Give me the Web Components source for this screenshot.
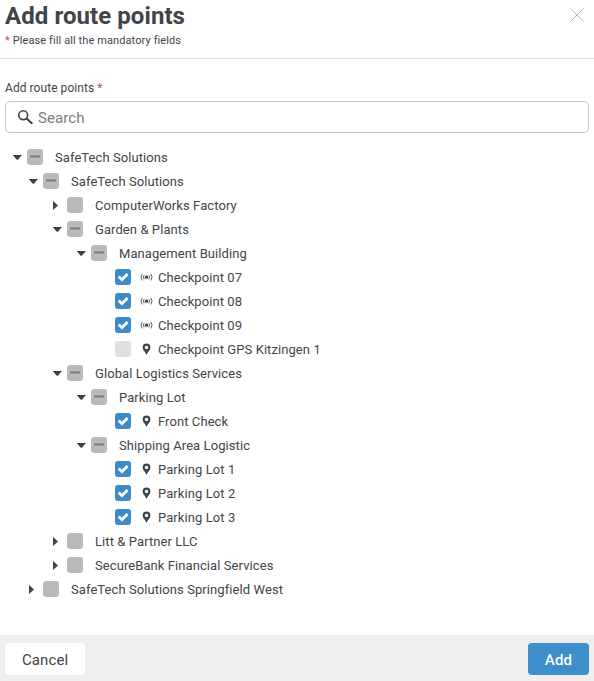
<!DOCTYPE html>
<html lang="en">
<head>
<meta charset="UTF-8">
<title>Add route points</title>
<style>
    body {
        margin: 0;
        background: #fff;
        color: #424547;
        font-family: Roboto, "Liberation Sans", sans-serif;
    }
</style>
</head>
<body>
<route-dialog>
    <dialog-header slot="header">
        Add route points
        <span slot="hint">Please fill all the mandatory fields</span>
    </dialog-header>
    <search-field label="Add route points" placeholder="Search"></search-field>
    <tree-view></tree-view>
    <action-button slot="footer">Cancel</action-button>
    <action-button slot="footer" primary>Add</action-button>
</route-dialog>

<script>
class RouteDialog extends HTMLElement {
    constructor() {
        super();
        this.attachShadow({ mode: "open" });
        this.shadowRoot.innerHTML = `
            <style>
                :host {
                    display: flex;
                    flex-direction: column;
                    height: 681px;
                    overflow: hidden;
                }
                main {
                    flex: 1;
                    padding: 20px 5px 0;
                }
                footer {
                    display: flex;
                    justify-content: space-between;
                    box-sizing: border-box;
                    height: 46px;
                    padding: 8px 5px 6px;
                    background: #efefef;
                }
            </style>
            <slot name="header"></slot>
            <main><slot></slot></main>
            <footer><slot name="footer"></slot></footer>
        `;
    }
}

class DialogHeader extends HTMLElement {
    constructor() {
        super();
        this.attachShadow({ mode: "open" });
        this.shadowRoot.innerHTML = `
            <style>
                :host {
                    display: flex;
                    justify-content: space-between;
                    box-sizing: border-box;
                    height: 59px;
                    padding: 2px 9px 0 5px;
                    border-bottom: 1px solid #dcdfe0;
                }
                h1 {
                    margin: 0;
                    font-size: 24px;
                    line-height: 28px;
                    font-weight: 700;
                    letter-spacing: 0.07px;
                    white-space: nowrap;
                }
                p {
                    margin: 3px 0 0;
                    font-size: 11px;
                    line-height: 16px;
                    letter-spacing: 0.1px;
                }
                b {
                    color: #c0504d;
                    font-weight: 400;
                }
                svg {
                    margin-top: 5px;
                }
            </style>
            <div>
                <h1><slot></slot></h1>
                <p><b>*</b> <slot name="hint"></slot></p>
            </div>
            <svg width="16" height="16" viewBox="0 0 16 16" fill="none" stroke="#b5b8ba" stroke-width="1">
                <path d="M1.5 1.5l13 13M14.5 1.5l-13 13"/>
            </svg>
        `;
    }
}

class SearchField extends HTMLElement {
    constructor() {
        super();
        this.attachShadow({ mode: "open" });
    }

    connectedCallback() {
        this.shadowRoot.innerHTML = `
            <style>
                :host {
                    display: block;
                }
                label {
                    display: block;
                    height: 22px;
                    font-size: 12px;
                    line-height: 18px;
                    letter-spacing: 0.06px;
                }
                b {
                    color: #c0504d;
                    font-weight: 400;
                }
                .box {
                    display: flex;
                    align-items: center;
                    gap: 4px;
                    box-sizing: border-box;
                    height: 32px;
                    padding: 0 12px;
                    border: 1px solid #c3c9ca;
                    border-radius: 5px;
                }
                input {
                    flex: 1;
                    padding: 2px 0 0;
                    border: 0;
                    outline: 0;
                    background: none;
                    font: 15px/20px Roboto, "Liberation Sans", sans-serif;
                    letter-spacing: 0.1px;
                }
                input::placeholder {
                    color: #7a7d7f;
                    opacity: 1;
                }
            </style>
            <label>${this.getAttribute("label")} <b>*</b></label>
            <div class="box">
                <svg width="16" height="16" viewBox="0 0 16 16" fill="none" stroke="#3f4245">
                    <circle cx="5.2" cy="6.2" r="4.4" stroke-width="1.6"/>
                    <path d="M8.3 9.3l6 5.5" stroke-width="2.1"/>
                </svg>
                <input type="text" placeholder="${this.getAttribute("placeholder")}">
            </div>
        `;
    }
}

class CheckBox extends HTMLElement {
    constructor() {
        super();
        this.attachShadow({ mode: "open" });
    }

    connectedCallback() {
        const marks = {
            checked: `<path d="M3.7 7.5l3.3 3.1 5.6-5.5" stroke="#fff" stroke-width="2.8"/>`,
            partial: `<path d="M3 7.5h10" stroke="#858585" stroke-width="2.4"/>`,
        };
        this.shadowRoot.innerHTML = `
            <style>
                :host {
                    display: block;
                    width: 16px;
                    height: 16px;
                    border-radius: 3px;
                    background: #bababa;
                }
                :host([state="checked"]) {
                    background: #3d8bc6;
                }
                :host([state="disabled"]) {
                    background: #dfdfdf;
                }
                svg {
                    display: block;
                }
            </style>
            <svg width="16" height="16" viewBox="0 0 16 16" fill="none">${marks[this.getAttribute("state")] || ""}</svg>
        `;
    }
}

const pointIcons = {
    beacon: `
        <svg width="13" height="10" viewBox="0 0 13 10" fill="none" stroke="#4b4e50" stroke-width="0.9">
            <circle cx="6.5" cy="5.2" r="1.6" fill="#3f4245" stroke="none"/>
            <path d="M4.2 3.1a3.4 3.4 0 0 0 0 4.2M8.8 3.1a3.4 3.4 0 0 1 0 4.2M2.2 1.9a5.6 5.6 0 0 0 0 6.6M10.8 1.9a5.6 5.6 0 0 1 0 6.6"/>
        </svg>`,
    pin: `
        <svg width="13" height="12" viewBox="0 0 13 12">
            <path fill="#3f4245" fill-rule="evenodd" d="M6.5 0.6a3.9 3.9 0 0 0-3.9 3.9c0 2.6 2.7 4.3 3.9 7.4 1.2-3.1 3.9-4.8 3.9-7.4a3.9 3.9 0 0 0-3.9-3.9zM6.5 2.8a1.7 1.7 0 1 1 0 3.4a1.7 1.7 0 0 1 0-3.4z"/>
        </svg>`,
};

// A folder shows an arrow, a point shows its kind; child nodes go in the slot
class TreeNode extends HTMLElement {
    constructor() {
        super();
        this.attachShadow({ mode: "open" });
    }

    connectedCallback() {
        const icon = pointIcons[this.getAttribute("icon")] || "";
        const open = this.hasAttribute("open");
        const arrow = open ? "M0.6 3h9.4l-4.7 5.3z" : "M1 1l5 4.5-5 4.5z";

        this.shadowRoot.innerHTML = `
            <style>
                :host {
                    display: block;
                }
                .row {
                    display: flex;
                    align-items: center;
                    height: 24px;
                }
                .arrow {
                    flex: none;
                    width: 10px;
                    height: 10px;
                    margin-right: 5px;
                }
                .label {
                    margin-left: 12px;
                    padding-top: 2px;
                    font-size: 13px;
                    line-height: 22px;
                    letter-spacing: 0.08px;
                    white-space: nowrap;
                }
                .icon {
                    display: flex;
                    margin-left: 9px;
                }
                .icon + .label {
                    margin-left: 5px;
                }
                .children {
                    padding-left: var(--indent, 24px);
                }
            </style>
            <div class="row">
                <svg class="arrow" viewBox="0 0 10 10">${icon ? "" : `<path fill="#3f4245" d="${arrow}"/>`}</svg>
                <check-box state="${this.getAttribute("state") || ""}"></check-box>
                ${icon ? `<span class="icon">${icon}</span>` : ""}
                <span class="label">${this.getAttribute("label")}</span>
            </div>
            <div class="children"><slot></slot></div>
        `;
    }
}

const point = (label, icon, state = "checked") => ({ label, icon, state });
const closed = (label) => ({ label });
const group = (label, children) => ({ label, children, state: "partial" });

const routeTree = group("SafeTech Solutions", [
    group("SafeTech Solutions", [
        closed("ComputerWorks Factory"),
        group("Garden &amp; Plants", [
            group("Management Building", [
                point("Checkpoint 07", "beacon"),
                point("Checkpoint 08", "beacon"),
                point("Checkpoint 09", "beacon"),
                point("Checkpoint GPS Kitzingen 1", "pin", "disabled"),
            ]),
        ]),
        group("Global Logistics Services", [
            group("Parking Lot", [
                point("Front Check", "pin"),
            ]),
            group("Shipping Area Logistic", [
                point("Parking Lot 1", "pin"),
                point("Parking Lot 2", "pin"),
                point("Parking Lot 3", "pin"),
            ]),
        ]),
        closed("Litt &amp; Partner LLC"),
        closed("SecureBank Financial Services"),
    ]),
    closed("SafeTech Solutions Springfield West"),
]);

class TreeView extends HTMLElement {
    constructor() {
        super();
        this.attachShadow({ mode: "open" });
    }

    connectedCallback() {
        this.shadowRoot.innerHTML = `
            <style>
                :host {
                    display: block;
                    padding: 12px 0 0 7px;
                }
                .root {
                    --indent: 16px;
                }
                .root > tree-node {
                    --indent: 24px;
                }
            </style>
            ${this.renderNode(routeTree, "root")}
        `;
    }

    renderNode(node, className = "") {
        const children = node.children || [];
        return `<tree-node class="${className}" label="${node.label}" state="${node.state || ""}" icon="${node.icon || ""}"${children.length ? " open" : ""}>${children.map((child) => this.renderNode(child)).join("")}</tree-node>`;
    }
}

class ActionButton extends HTMLElement {
    constructor() {
        super();
        this.attachShadow({ mode: "open" });
        this.shadowRoot.innerHTML = `
            <style>
                :host {
                    display: block;
                    height: 32px;
                }
                button {
                    display: block;
                    height: 32px;
                    padding: 2px 17px 0;
                    border: 0;
                    border-radius: 4px;
                    background: #fff;
                    color: #424547;
                    font: 15px/30px Roboto, "Liberation Sans", sans-serif;
                    letter-spacing: 0.1px;
                }
                :host([primary]) button {
                    background: #3d8ecb;
                    color: #fff;
                    font-weight: 500;
                }
            </style>
            <button type="button"><slot></slot></button>
        `;
    }
}

customElements.define("route-dialog", RouteDialog);
customElements.define("dialog-header", DialogHeader);
customElements.define("search-field", SearchField);
customElements.define("check-box", CheckBox);
customElements.define("tree-node", TreeNode);
customElements.define("tree-view", TreeView);
customElements.define("action-button", ActionButton);
</script>
</body>
</html>
